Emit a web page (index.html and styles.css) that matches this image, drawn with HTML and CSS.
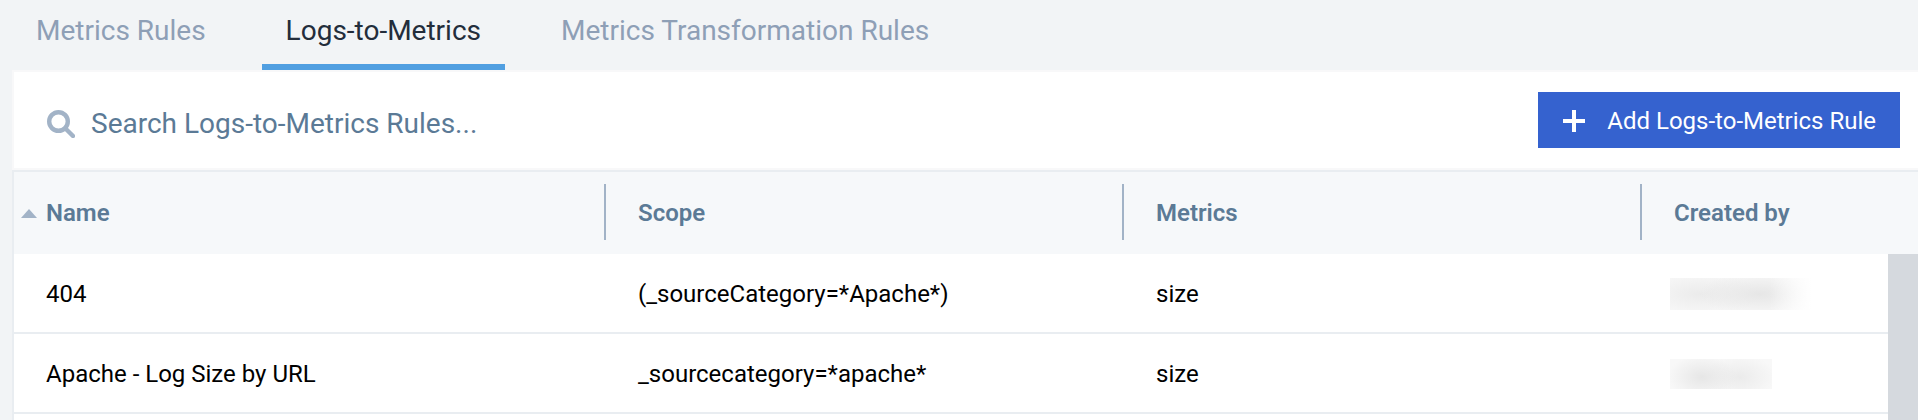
FILE: index.html
```html
<!DOCTYPE html>
<html lang="en">
<head>
<meta charset="utf-8">
<title>Logs-to-Metrics</title>
<link rel="stylesheet" href="styles.css">
</head>
<body>
<nav class="tabs">
  <a class="tab" href="#metrics-rules">Metrics Rules</a>
  <a class="tab tab-active" href="#logs-to-metrics" aria-current="page">Logs-to-Metrics</a>
  <a class="tab" href="#transformation">Metrics Transformation Rules</a>
</nav>
<main class="panel">
  <div class="toolbar">
    <label class="search">
      <svg class="search-icon" viewBox="0 0 28 28" aria-hidden="true"><circle cx="11.5" cy="11.5" r="9.3"/><path d="M18.2 18.2 26 26"/></svg>
      <input class="search-input" type="search" placeholder="Search Logs-to-Metrics Rules..." aria-label="Search Logs-to-Metrics Rules">
    </label>
    <button class="add" type="button">
      <svg class="add-icon" viewBox="0 0 22 22" aria-hidden="true"><path d="M11 0v22M0 11h22"/></svg>
      Add Logs-to-Metrics Rule
    </button>
  </div>
  <table class="rules">
    <colgroup><col class="col-name"><col class="col-mid"><col class="col-mid"><col><col class="col-scroll"></colgroup>
    <thead>
      <tr>
        <th scope="col" aria-sort="ascending"><div class="head head-sorted"><svg class="sort" viewBox="0 0 16 9" aria-hidden="true"><path d="M0 9 8 0l8 9z"/></svg>Name</div></th>
        <th scope="col"><div class="head">Scope</div></th>
        <th scope="col"><div class="head">Metrics</div></th>
        <th scope="col" colspan="2"><div class="head head-last">Created by</div></th>
      </tr>
    </thead>
    <tbody>
      <tr>
        <td>404</td>
        <td>(_sourceCategory=*Apache*)</td>
        <td>size</td>
        <td class="creator"><div class="redacted redacted-long"></div></td>
        <td class="scrollbar" rowspan="3"></td>
      </tr>
      <tr>
        <td>Apache - Log Size by URL</td>
        <td>_sourcecategory=*apache*</td>
        <td>size</td>
        <td class="creator"><div class="redacted redacted-short"></div></td>
      </tr>
      <tr class="rest"><td colspan="4"></td></tr>
    </tbody>
  </table>
</main>
</body>
</html>
```
FILE: styles.css
```css
* { box-sizing: border-box; }

body {
  margin: 0;
  min-height: 100vh;
  background: #f2f4f6;
  color: #000;
  font-family: Roboto, "Liberation Sans", sans-serif;
  font-size: 24px;
}

.tabs {
  display: flex;
  gap: 32px;
  padding-left: 12px;
}

.tab {
  padding: 13px 24px 15px;
  border-bottom: 6px solid transparent;
  color: #8e9fb6;
  font-size: 28px;
  line-height: 36px;
  text-decoration: none;
}

.tab-active {
  border-bottom-color: #519fe1;
  color: #232d3b;
}

.panel { margin-left: 12px; }

.toolbar {
  display: flex;
  align-items: center;
  justify-content: space-between;
  padding: 20px 18px 20px 33px;
  border: solid #f8f8f9;
  border-width: 2px 0 2px 2px;
  background: #fff;
}

.search {
  display: flex;
  flex: 1;
  align-items: center;
  gap: 16px;
  padding-top: 8px;
}

.search-icon {
  width: 28px;
  height: 28px;
  fill: none;
  stroke: #a2b3c7;
  stroke-width: 4.4;
}

.search-icon path { stroke-linecap: round; }

.search-input {
  flex: 1;
  padding: 0;
  border: 0;
  outline: 0;
  background: none;
  color: #000;
  font: inherit;
  font-size: 28px;
  line-height: 36px;
}

.search-input::placeholder {
  color: #5b7a96;
  opacity: 1;
}

.add {
  display: flex;
  align-items: center;
  gap: 22px;
  height: 56px;
  padding: 2px 24px 0 25px;
  border: 0;
  background: #3562cf;
  color: #fff;
  font: inherit;
}

.add-icon {
  width: 22px;
  height: 22px;
  stroke: #fff;
  stroke-width: 4;
}

.rules {
  width: 100%;
  border: solid #e9edf1;
  border-width: 2px 0 0 2px;
  border-spacing: 0;
  table-layout: fixed;
  background: #fff;
}

.col-name { width: 592px; }
.col-mid { width: 518px; }
.col-scroll { width: 30px; }

th {
  padding: 12px 0 14px;
  background: #f6f8fa;
  color: #5b7a96;
  font-weight: 600;
  text-align: left;
}

.head {
  display: flex;
  align-items: center;
  height: 56px;
  padding-top: 2px;
  padding-left: 32px;
  border-right: 2px solid #a2b3c7;
}

.head-last { border-right: 0; }

.head-sorted {
  gap: 9px;
  padding-left: 7px;
}

.sort {
  width: 16px;
  height: 9px;
  fill: #a2b3c7;
}

td {
  height: 80px;
  padding: 2px 32px 0;
  border-bottom: 2px solid #e9edf1;
}

.creator { padding-left: 28px; }

.redacted {
  background-color: #f8f8f8;
}

.redacted-long {
  width: 142px;
  height: 32px;
  background-image:
    linear-gradient(90deg, transparent 70%, #fff),
    radial-gradient(ellipse 60px 22px at 90px 50%, #e6e6e6, transparent),
    radial-gradient(ellipse 60px 22px at 30px 50%, #ebebeb, transparent);
}

.redacted-short {
  width: 102px;
  height: 30px;
  background-image:
    radial-gradient(ellipse 34px 22px at 32px 60%, #e6e6e6, transparent),
    radial-gradient(ellipse 36px 22px at 70px 60%, #ebebeb, transparent);
}

.scrollbar {
  padding: 0;
  border: 0;
  background: #d5d9de;
}

.rest td {
  height: 6px;
  padding: 0;
  border: 0;
}
```
